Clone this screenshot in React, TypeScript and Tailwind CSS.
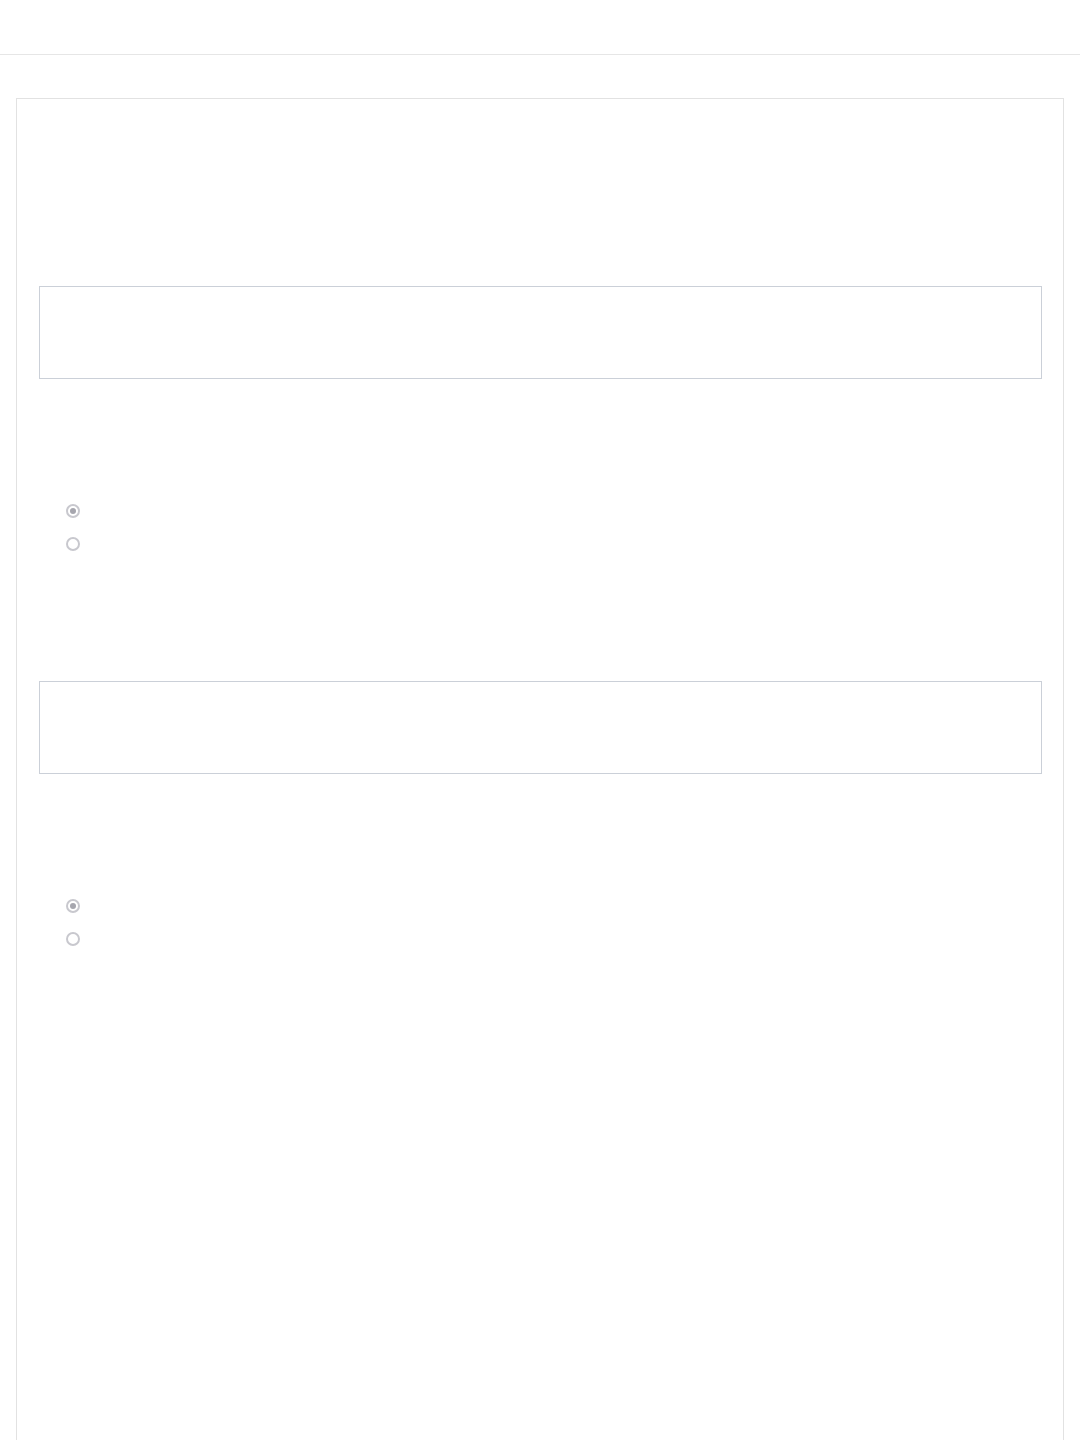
function Radio({ checked }: { checked?: boolean }) {
  return (
    <span className="flex h-[14px] w-[14px] items-center justify-center rounded-full border-2 border-[#c8c8ce] bg-white">
      {checked && <span className="h-[6px] w-[6px] rounded-full bg-[#a6a6ae]" />}
    </span>
  );
}

export default function App() {
  const sections = ["a", "b"];

  return (
    <div className="min-h-[1440px] bg-white font-['Liberation_Sans',sans-serif]">
      <header className="h-[55px] border-b border-[#e6e6e6] bg-white" />

      <main className="px-4 pt-[43px]">
        <div className="min-h-[1400px] border border-[#e2e2e2] bg-white pl-[22px] pr-[21px] pt-[187px]">
          {sections.map((name) => (
            <section key={name} className="mb-[131px]">
              <div className="h-[93px] w-full border border-[#cbd0d8]" />

              <div className="mt-[125px] mb-[-1px] flex flex-col gap-[19px] pl-[27px]">
                <label className="flex items-center">
                  <Radio checked />
                </label>
                <label className="flex items-center">
                  <Radio />
                </label>
              </div>
            </section>
          ))}
        </div>
      </main>
    </div>
  );
}
